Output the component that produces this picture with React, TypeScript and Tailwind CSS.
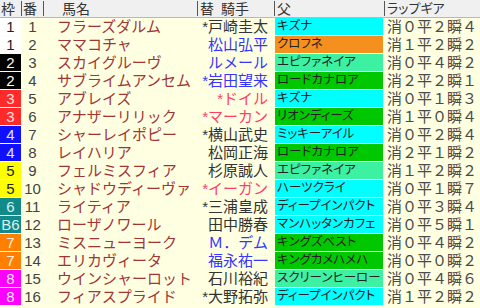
const WAKU: Record<string, string> = {
  "1": "bg-white text-[#222]",
  "2": "bg-black text-white",
  "3": "bg-[#ff2a2a] text-[#ffe0e0]",
  "4": "bg-[#1010ff] text-[#e0e0ff]",
  "5": "bg-[#ffff00] text-[#222]",
  "6": "bg-[#128a8a] text-[#d8f0f0]",
  "7": "bg-[#ff8000] text-[#fff0e0]",
  "8": "bg-[#ff00ff] text-[#ffe8ff]",
};

const SIRE: Record<string, string> = {
  cyan: "bg-[#00ffff]",
  orange: "bg-[#f5901e]",
  mint: "bg-[#3cf2a2]",
  green: "bg-[#00c800]",
};

const JOCKEY: Record<string, string> = {
  k: "text-[#333]",
  b: "text-[#3535ff]",
  r: "text-[#ff3d6b]",
};

type Row = {
  w: string;
  wl?: string;
  no: number;
  name: string;
  jockey: string;
  jc: string;
  sire: string;
  sc: string;
  lap: string;
};

const rows: Row[] = [
  { w: "1", no: 1, name: "フラーズダルム", jockey: "*戸崎圭太", jc: "k", sire: "キズナ", sc: "cyan", lap: "消０平２瞬４" },
  { w: "1", no: 2, name: "ママコチャ", jockey: "松山弘平", jc: "b", sire: "クロフネ", sc: "orange", lap: "消１平２瞬２" },
  { w: "2", no: 3, name: "スカイグルーヴ", jockey: "ルメール", jc: "b", sire: "エピファネイア", sc: "mint", lap: "消０平４瞬２" },
  { w: "2", no: 4, name: "サブライムアンセム", jockey: "*岩田望来", jc: "b", sire: "ロードカナロア", sc: "green", lap: "消２平２瞬１" },
  { w: "3", no: 5, name: "アブレイズ", jockey: "*ドイル", jc: "r", sire: "キズナ", sc: "cyan", lap: "消０平１瞬３" },
  { w: "3", no: 6, name: "アナザーリリック", jockey: "*マーカン", jc: "r", sire: "リオンディーズ", sc: "green", lap: "消１平０瞬４" },
  { w: "4", no: 7, name: "シャーレイポピー", jockey: "*横山武史", jc: "k", sire: "ミッキーアイル", sc: "cyan", lap: "消０平２瞬４" },
  { w: "4", no: 8, name: "レイハリア", jockey: "松岡正海", jc: "k", sire: "ロードカナロア", sc: "green", lap: "消２平１瞬２" },
  { w: "5", no: 9, name: "フェルミスフィア", jockey: "杉原誠人", jc: "k", sire: "エピファネイア", sc: "mint", lap: "消１平２瞬２" },
  { w: "5", no: 10, name: "シャドウディーヴァ", jockey: "*イーガン", jc: "r", sire: "ハーツクライ", sc: "cyan", lap: "消０平１瞬７" },
  { w: "6", no: 11, name: "ライティア", jockey: "*三浦皇成", jc: "k", sire: "ディープインパクト", sc: "cyan", lap: "消０平３瞬４" },
  { w: "6", wl: "B6", no: 12, name: "ローザノワール", jockey: "田中勝春", jc: "k", sire: "マンハッタンカフェ", sc: "cyan", lap: "消０平５瞬１" },
  { w: "7", no: 13, name: "ミスニューヨーク", jockey: "Ｍ．デム", jc: "b", sire: "キングズベスト", sc: "green", lap: "消０平４瞬２" },
  { w: "7", no: 14, name: "エリカヴィータ", jockey: "福永祐一", jc: "b", sire: "キングカメハメハ", sc: "green", lap: "消０平０瞬２" },
  { w: "8", no: 15, name: "ウインシャーロット", jockey: "石川裕紀", jc: "k", sire: "スクリーンヒーロー", sc: "mint", lap: "消０平４瞬６" },
  { w: "8", no: 16, name: "フィアスプライド", jockey: "*大野拓弥", jc: "k", sire: "ディープインパクト", sc: "cyan", lap: "消１平２瞬２" },
];

function Divider() {
  return <div className="w-px h-[15px] bg-[#555] self-center" />;
}

export default function App() {
  return (
    <div className="w-[480px] h-[308px] overflow-hidden bg-[#ffffe2] [font-family:'Liberation_Sans','Noto_Sans_CJK_JP',sans-serif] leading-none">
      {/* header */}
      <div className="flex h-[18px] bg-[#f0f0f0] border-b border-[#b8b8b8] text-[14px] text-[#333]">
        <div className="w-[21px] flex items-center pl-px">枠</div>
        <Divider />
        <div className="w-[21px] flex items-center pl-[1px]">番</div>
        <Divider />
        <div className="w-[153px] flex items-center pl-[18px]">馬名</div>
        <Divider />
        <div className="w-[76px] flex items-center pl-[2px]">
          <span>替</span>
          <span className="ml-[7px]">騎手</span>
        </div>
        <Divider />
        <div className="w-[109px] flex items-center pl-[2px]">父</div>
        <Divider />
        <div className="flex-1 flex items-center pl-[2px] text-[13px] [font-feature-settings:'palt']">ラップギア</div>
      </div>

      {/* body */}
      <div className="flex flex-col gap-px">
        {rows.map((r) => (
          <div key={r.no} className="flex h-[17px]">
            <div className={`w-[21px] flex items-center justify-center text-[15px] ${WAKU[r.w]}`}>
              {r.wl ?? r.w}
            </div>
            <div className="w-[23px] flex items-center justify-center text-[15px] text-[#444]">{r.no}</div>
            <div className="w-[153px] flex items-center pl-[13px] text-[15px] text-[#a03535] whitespace-nowrap overflow-hidden">
              {r.name}
            </div>
            <div className={`w-[77px] flex items-center justify-end pr-[6px] text-[15px] whitespace-nowrap ${JOCKEY[r.jc]}`}>
              {r.jockey}
            </div>
            <div className="w-[110px] pl-px pr-px">
              <div className={`h-full flex items-center pl-[2px] text-[12.5px] text-[#222] whitespace-nowrap overflow-hidden [font-feature-settings:'palt'] ${SIRE[r.sc]}`}>
                {r.sire}
              </div>
            </div>
            <div className="flex-1 flex items-center pl-[3px] text-[15px] text-[#4a4a4a] whitespace-nowrap">{r.lap}</div>
          </div>
        ))}
      </div>
    </div>
  );
}
